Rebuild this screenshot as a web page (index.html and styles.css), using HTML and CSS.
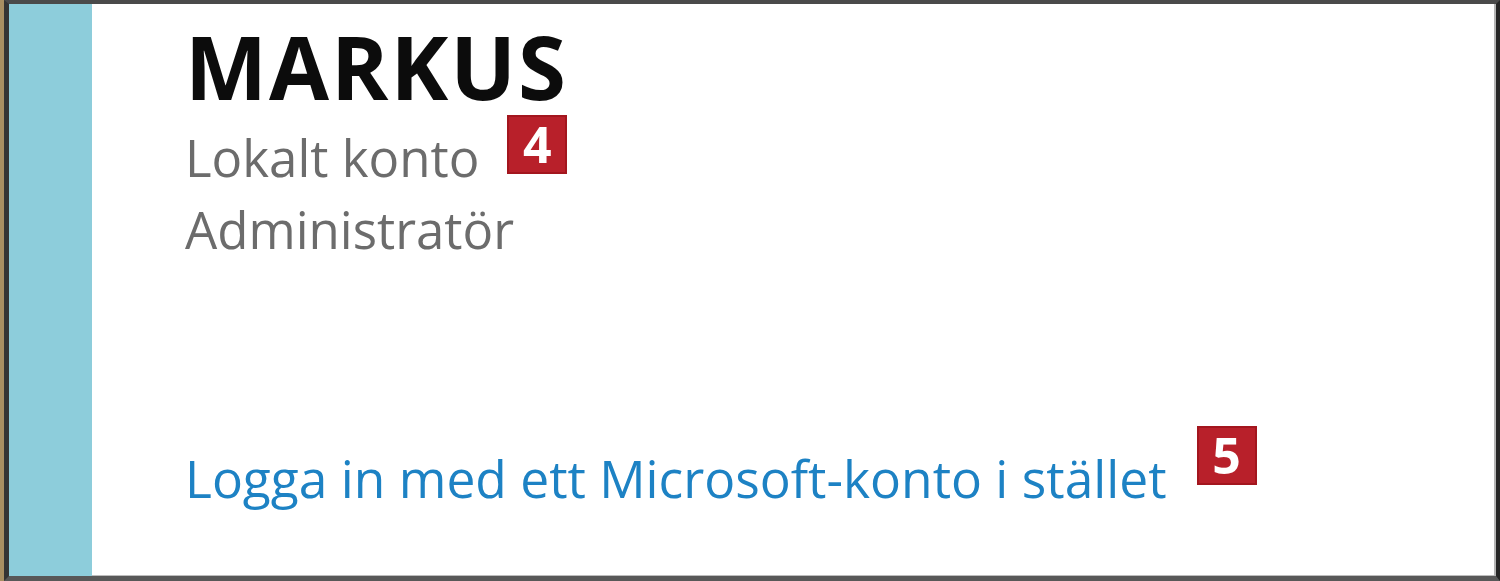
FILE: index.html
```html
<!DOCTYPE html>
<html lang="sv">
<head>
  <meta charset="UTF-8" />
  <meta name="viewport" content="width=device-width, initial-scale=1.0" />
  <title>Ditt konto – Markus</title>

<link rel="stylesheet" href="styles.css">
</head>
<body>

<!-- desktop edge -->
<div class="bezel"></div>

<!-- account panel -->
<div class="window">
  <div class="accent"></div>

  <div class="account">
    <h1 class="account-name">MARKUS</h1>

    <div class="account-row">
      <span class="account-meta">Lokalt konto</span>
      <span class="callout callout-4">4</span>
    </div>
    <div class="account-row">
      <span class="account-meta">Administratör</span>
    </div>

    <div class="account-row account-switch">
      <a class="switch-link" href="#">Logga in med ett Microsoft-konto i stället</a>
      <span class="callout callout-5">5</span>
    </div>
  </div>
</div>

</body>
</html>
```

FILE: styles.css
```css
  /* ─── page base ─────────────────────────────────────────── */
  body {
    margin: 0;
    height: 581px;
    display: flex;
    background: #2c2c2c;
    font-family: "Open Sans", "Noto Sans", sans-serif;
    overflow: hidden;
  }

  .bezel {
    width: 4px;
    background: #a88f62;
  }

  /* ─── window frame ──────────────────────────────────────── */
  .window {
    flex: 1;
    display: flex;
    background: #fff;
    border-top: 4px solid #4a4a4a;
    border-left: 5px solid #343434;
    border-right: 4px solid #262626;
    border-bottom: 5px solid #585858;
    box-shadow: inset -2px 0 0 #b4b4b4, inset 0 -1px 0 #bdbdbd;
  }

  .accent {
    width: 83px;
    background: #8dcddb;
  }

  /* ─── account block ─────────────────────────────────────── */
  .account {
    flex: 1;
    display: flex;
    flex-direction: column;
    align-items: flex-start;
    padding: 17px 0 62px 93px;
  }

  .account-name {
    margin: 0 0 10px;
    font-size: 87px;
    line-height: 90px;
    font-weight: 700;
    color: #0c0c0c;
    letter-spacing: 2px;
  }

  .account-row {
    display: flex;
    align-items: flex-start;
  }

  .account-meta {
    font-size: 51px;
    line-height: 72px;
    color: #6c6c6c;
  }

  .account-switch {
    margin-top: auto;
  }

  .switch-link {
    font-size: 51.5px;
    line-height: 72px;
    color: #1d82c4;
    text-decoration: none;
  }

  /* ─── numbered callouts ─────────────────────────────────── */
  .callout {
    width: 56px;
    height: 55px;
    border: 2px solid #a3161e;
    background: #b8202a;
    color: #fff;
    font-size: 50px;
    font-weight: 700;
    line-height: 55px;
    text-align: center;
  }

  .callout-4 {
    margin: -6px 0 0 28px;
  }

  .callout-5 {
    margin: -16px 0 0 30px;
  }
```
